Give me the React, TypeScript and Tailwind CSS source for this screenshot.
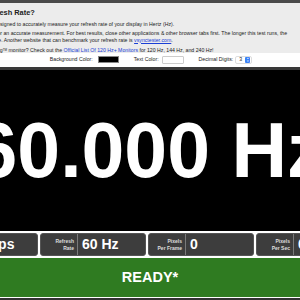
import React from "react";

const stats = [
  { label: ["Frame", "Rate"], value: "60 fps" },
  { label: ["Refresh", "Rate"], value: "60 Hz" },
  { label: ["Pixels", "Per Frame"], value: "0" },
  { label: ["Pixels", "Per Sec"], value: "0" },
];

const App = () => {
  return (
    <div className="w-[300px] h-[300px] overflow-hidden bg-white font-['Liberation_Sans',Arial,sans-serif]">
      {/* top bar */}
      <div className="h-[3px] bg-[#4a4a4a]" />

      {/* intro */}
      <div className="h-[50px] bg-[#ececec] overflow-hidden">
        <div className="-ml-[32px] w-[420px] text-[5.2px] leading-[6.5px] text-[#222] whitespace-nowrap">
          <h1 className="pt-[5px] text-[7.4px] leading-[9px] font-bold text-[#222]">
            Test Refresh Rate?
          </h1>
          <p className="mt-[4px]">
            This test is designed to accurately measure your refresh rate of your display in Hertz (Hz).
          </p>
          <p className="mt-[2.5px]">
            Please wait for an accurate measurement. For best results, close other applications &amp; other browser tabs first. The longer this test runs, the
          </p>
          <p>
            more accurate. Another website that can benchmark your refresh rate is{" "}
            <a className="text-[#1a3fd6] underline">vsynctester.com</a>.
          </p>
          <p className="mt-[4px]">
            Want a gaming<sup className="text-[3px]">TM</sup> monitor? Check out the{" "}
            <a className="text-[#1a3fd6] underline">Official List Of 120 Hz+ Monitors</a> for 120 Hz, 144 Hz, and 240 Hz!
          </p>
        </div>
      </div>

      {/* controls */}
      <div className="h-[14px] bg-white flex items-center justify-center gap-[15px] text-[5.2px] text-[#222] whitespace-nowrap pl-[2px]">
        <div className="flex items-center gap-[5px]">
          <span>Background Color:</span>
          <span className="w-[21px] h-[7px] bg-black border border-[#888]" />
        </div>
        <div className="flex items-center gap-[3px]">
          <span>Text Color:</span>
          <span className="w-[22px] h-[8px] bg-white border border-[#ccc] rounded-[1px]" />
        </div>
        <div className="flex items-center gap-[2px]">
          <span>Decimal Digits:</span>
          <span className="w-[17px] h-[8px] flex items-center justify-between pl-[3px] pr-[1px] border border-[#ddd] rounded-[2px]">
            <span>3</span>
            <span className="w-[5px] h-[6px] rounded-[1px] bg-[#3a82f7] flex flex-col items-center justify-center text-white text-[3px] leading-[3px]">
              <span>▴</span>
              <span>▾</span>
            </span>
          </span>
        </div>
      </div>
      <div className="h-[3px] bg-[#3a3a3a]" />

      {/* display */}
      <div className="h-[161px] bg-black flex items-center justify-center overflow-hidden">
        <span className="whitespace-nowrap text-white font-bold text-[77px] leading-none">
          60.000 Hz
        </span>
      </div>

      {/* stats */}
      <div className="pt-[2px] pb-[2px] bg-white overflow-hidden">
        <div className="-ml-[68px] flex gap-[2px]">
          {stats.map((s) => (
            <div
              key={s.label.join(" ")}
              className="w-[106px] h-[23px] shrink-0 flex bg-[#3d3d3d] rounded-[3px] border border-[#555]"
            >
              <div className="w-[37px] pr-[3px] flex flex-col justify-center items-end text-[5px] leading-[7px] font-bold text-[#ddd] border-r border-[#7a7a7a]">
                <span>{s.label[0]}</span>
                <span>{s.label[1]}</span>
              </div>
              <div className="pl-[4px] flex items-center text-white font-bold text-[14px] whitespace-nowrap">
                {s.value}
              </div>
            </div>
          ))}
        </div>
      </div>

      {/* ready */}
      <div className="h-[39px] bg-[#2f7b21] flex items-center justify-center text-white font-bold text-[14.5px]">
        READY*
      </div>
      <div className="h-[1px] bg-white" />
      <div className="h-[3px] bg-[#333]" />
    </div>
  );
};

export default App;
